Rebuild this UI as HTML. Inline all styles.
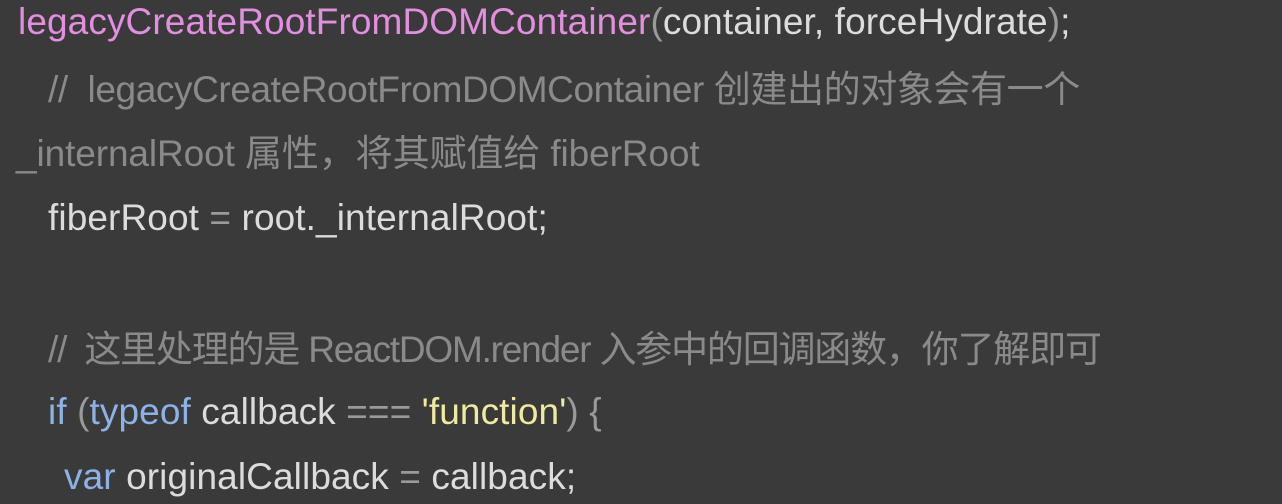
<!DOCTYPE html>
<html><head><meta charset="utf-8"><style>
html,body{margin:0;padding:0;background:#3a3a3a;width:1282px;height:504px;overflow:hidden}
.l{position:absolute;white-space:nowrap;font-family:"Liberation Sans","Noto Sans CJK SC",sans-serif;font-size:37px;color:#dcdcdc;line-height:44px;letter-spacing:0.1px}
.p{color:#e38fe0}.c{color:#8a8a8a}.k{color:#8db2e6}.s{color:#efeaa0}.g{color:#9a9a9a}
</style></head><body>
<div class="l" style="left:18px;top:0px"><span class="p">legacyCreateRootFromDOMContainer</span><span class="g">(</span>container, forceHydrate<span class="g">)</span>;</div>
<div class="l c" style="left:48px;top:68px;letter-spacing:-0.4px">// &nbsp;legacyCreateRootFromDOMContainer 创建出的对象会有一个</div>
<div class="l c" style="left:16px;top:132px;letter-spacing:-0.1px">_internalRoot 属性，将其赋值给 fiberRoot</div>
<div class="l" style="left:48px;top:196px">fiberRoot <span class="g">=</span> root._internalRoot;</div>
<div class="l c" style="left:48px;top:328px;letter-spacing:-1.2px">// &nbsp;这里处理的是 ReactDOM.render 入参中的回调函数，你了解即可</div>
<div class="l" style="left:48px;top:390px"><span class="k">if</span> <span class="g">(</span><span class="k">typeof</span> callback <span class="g">===</span> <span class="s">'function'</span><span class="g">) {</span></div>
<div class="l" style="left:64px;top:455px"><span class="k">var</span> originalCallback <span class="g">=</span> callback;</div>
</body></html>
